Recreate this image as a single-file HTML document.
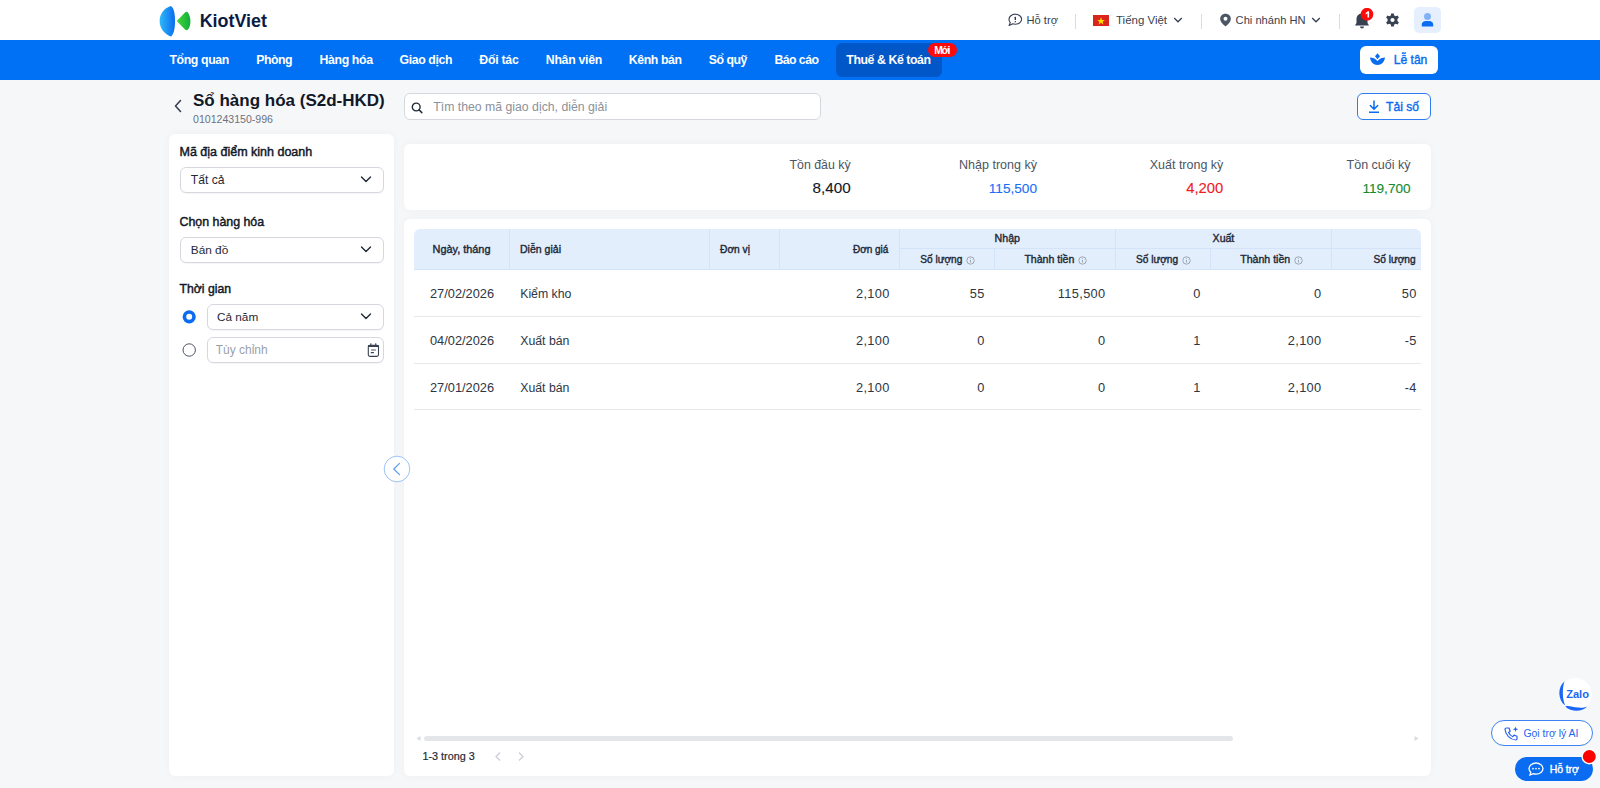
<!DOCTYPE html>
<html><head><meta charset="utf-8"><style>
html,body{margin:0;padding:0;width:1600px;height:788px;overflow:hidden;background:#f6f7f9;font-family:"Liberation Sans",sans-serif}
.bm{display:inline-block;width:0;height:0}
.t{position:absolute;line-height:1;white-space:nowrap;font-family:"Liberation Sans",sans-serif}
</style></head><body>
<div style="position:absolute;left:0;top:0;width:1600px;height:40px;background:#fff"></div>
<svg style="position:absolute;left:155px;top:2px" width="40" height="38" viewBox="0 0 40 38"><defs><linearGradient id="lb" x1="0" x2="1" y1="0" y2="0"><stop offset="0" stop-color="#2fb8f8"/><stop offset="1" stop-color="#0a6cf0"/></linearGradient>
<linearGradient id="lg" x1="0" x2="1"><stop offset="0" stop-color="#46d63a"/><stop offset="1" stop-color="#10ad3c"/></linearGradient></defs>
<path d="M16,4 C19,6 20,12 20,19 C20,26 19,32 16,34.5 C9,32 4.6,26 4.6,19 C4.6,12 9,6 16,4 Z" fill="url(#lb)"/>
<path d="M21.7,19 L30,10.5 C31,9.6 32,9.6 33,10.6 C35,14 35.4,17 35.4,19 C35.4,22 35,25 33,27.6 C32,28.6 31,28.6 30,27.6 Z" fill="url(#lg)"/></svg>
<div class="t" style="left:199.70px;top:13.01px;font-size:17.90px;font-weight:700;color:#0b1b44;">KiotViet<span class="bm" id="t1"></span></div>
<svg style="position:absolute;left:1008px;top:13px" width="15" height="14" viewBox="0 0 15 14"><path d="M7.3,1.2 C10.9,1.2 13.6,3.5 13.6,6.2 C13.6,8.9 10.9,11.2 7.3,11.2 C6.4,11.2 5.6,11.1 4.8,10.8 L1.1,12.5 L2.3,9.6 C1.4,8.7 1,7.5 1,6.2 C1,3.5 3.7,1.2 7.3,1.2 Z" fill="none" stroke="#374151" stroke-width="1.15" stroke-linejoin="round"/><rect x="6.65" y="3.8" width="1.3" height="3.3" rx="0.4" fill="#1f2937"/><rect x="6.65" y="8" width="1.3" height="1.3" rx="0.4" fill="#1f2937"/></svg>
<div class="t" style="left:1026.50px;top:15.01px;font-size:11.16px;font-weight:400;color:#374151;">Hỗ trợ<span class="bm" id="t2"></span></div>
<div style="position:absolute;left:1075px;top:14px;width:1px;height:15px;background:#d9dde3"></div>
<div style="position:absolute;left:1093px;top:15px;width:16px;height:11px;background:#da251d"></div>
<svg style="position:absolute;left:1093px;top:15px" width="16" height="11" viewBox="0 0 16 11"><polygon points="8,2.2 9,5 11.9,5 9.6,6.7 10.4,9.4 8,7.8 5.6,9.4 6.4,6.7 4.1,5 7,5" fill="#ffde00"/></svg>
<div class="t" style="left:1116.00px;top:15.00px;font-size:11.47px;font-weight:400;color:#374151;">Tiếng Việt<span class="bm" id="t3"></span></div>
<svg style="position:absolute;left:1173px;top:16px" width="10" height="8" viewBox="0 0 10 8"><path d="M1.2,2 L5,5.8 L8.8,2" fill="none" stroke="#374151" stroke-width="1.3"/></svg>
<div style="position:absolute;left:1201px;top:14px;width:1px;height:15px;background:#d9dde3"></div>
<svg style="position:absolute;left:1219px;top:13px" width="13" height="14" viewBox="0 0 13 14"><path d="M6.5,0.8 C9.6,0.8 11.8,3 11.8,6 C11.8,9 8.5,12 6.5,13.4 C4.5,12 1.2,9 1.2,6 C1.2,3 3.4,0.8 6.5,0.8 Z" fill="#4b5563"/><circle cx="6.5" cy="5.8" r="2" fill="#fff"/></svg>
<div class="t" style="left:1235.60px;top:15.01px;font-size:11.14px;font-weight:400;color:#374151;">Chi nhánh HN<span class="bm" id="t4"></span></div>
<svg style="position:absolute;left:1311px;top:16px" width="10" height="8" viewBox="0 0 10 8"><path d="M1.2,2 L5,5.8 L8.8,2" fill="none" stroke="#374151" stroke-width="1.3"/></svg>
<div style="position:absolute;left:1339px;top:14px;width:1px;height:15px;background:#d9dde3"></div>
<svg style="position:absolute;left:1353px;top:8px" width="22" height="22" viewBox="0 0 22 22"><path d="M9,5.5 C12.5,5.5 14.5,8 14.5,11.5 L14.5,15 L16,17.5 L2,17.5 L3.5,15 L3.5,11.5 C3.5,8 5.5,5.5 9,5.5 Z" fill="#374151"/><path d="M7,18.5 L11,18.5 C11,19.8 10,20.5 9,20.5 C8,20.5 7,19.8 7,18.5 Z" fill="#374151"/><circle cx="14" cy="6.2" r="6.3" fill="#ff0a0a"/><path d="M12.7,4.9 L14.8,3.2 L16.1,3.2 L16.1,9.5 L14.5,9.5 L14.5,5.3 L12.7,6.4 Z" fill="#fff"/></svg>
<svg style="position:absolute;left:1385px;top:13px" width="15" height="14" viewBox="0 0 15 14"><g transform="translate(7.5,7)"><path d="M-1.3,-6.5 L1.3,-6.5 L1.7,-4.6 L3.2,-3.8 L5,-4.6 L6.4,-2.4 L4.9,-1.1 L4.9,1.1 L6.4,2.4 L5,4.6 L3.2,3.8 L1.7,4.6 L1.3,6.5 L-1.3,6.5 L-1.7,4.6 L-3.2,3.8 L-5,4.6 L-6.4,2.4 L-4.9,1.1 L-4.9,-1.1 L-6.4,-2.4 L-5,-4.6 L-3.2,-3.8 L-1.7,-4.6 Z" fill="#374151"/><circle r="2.1" fill="#fff"/></g></svg>
<div style="position:absolute;left:1414px;top:7px;width:27px;height:26px;background:#e5effd;border-radius:5px"></div>
<svg style="position:absolute;left:1414px;top:7px" width="27" height="26" viewBox="0 0 27 26"><circle cx="13.5" cy="9.6" r="3.5" fill="#7fb2f8"/><path d="M7.8,19.5 L7.8,17.6 C7.8,15.4 9.6,14.1 11.8,14.1 L15.2,14.1 C17.4,14.1 19.2,15.4 19.2,17.6 L19.2,19.5 Z" fill="#0a6cf0"/></svg>
<div style="position:absolute;left:0;top:40px;width:1600px;height:40px;background:#0070f4"></div>
<div style="position:absolute;left:836px;top:43.3px;width:105.5px;height:33.3px;background:#0157c8;border-radius:6px"></div>
<div class="t" style="left:169.50px;top:54.01px;font-size:12.30px;font-weight:700;color:#fff;letter-spacing:-0.387px;">Tổng quan<span class="bm" id="t5"></span></div>
<div class="t" style="left:256.25px;top:54.01px;font-size:12.30px;font-weight:700;color:#fff;letter-spacing:-0.501px;">Phòng<span class="bm" id="t6"></span></div>
<div class="t" style="left:319.50px;top:54.01px;font-size:12.30px;font-weight:700;color:#fff;letter-spacing:-0.361px;">Hàng hóa<span class="bm" id="t7"></span></div>
<div class="t" style="left:399.50px;top:54.01px;font-size:12.30px;font-weight:700;color:#fff;letter-spacing:-0.380px;">Giao dịch<span class="bm" id="t8"></span></div>
<div class="t" style="left:479.25px;top:54.01px;font-size:12.30px;font-weight:700;color:#fff;letter-spacing:-0.251px;">Đối tác<span class="bm" id="t9"></span></div>
<div class="t" style="left:545.80px;top:54.01px;font-size:12.30px;font-weight:700;color:#fff;letter-spacing:-0.297px;">Nhân viên<span class="bm" id="t10"></span></div>
<div class="t" style="left:628.70px;top:54.01px;font-size:12.30px;font-weight:700;color:#fff;letter-spacing:-0.390px;">Kênh bán<span class="bm" id="t11"></span></div>
<div class="t" style="left:708.80px;top:54.01px;font-size:12.30px;font-weight:700;color:#fff;letter-spacing:-0.500px;">Sổ quỹ<span class="bm" id="t12"></span></div>
<div class="t" style="left:774.40px;top:54.01px;font-size:12.30px;font-weight:700;color:#fff;letter-spacing:-0.541px;">Báo cáo<span class="bm" id="t13"></span></div>
<div class="t" style="left:846.30px;top:54.01px;font-size:12.30px;font-weight:700;color:#fff;letter-spacing:-0.423px;">Thuế &amp; Kế toán<span class="bm" id="t14"></span></div>
<div style="position:absolute;left:928.3px;top:43.2px;width:28.5px;height:14.3px;background:#ff0a0a;border-radius:7.2px"></div>
<div class="t" style="left:934.20px;top:46.01px;font-size:10.40px;font-weight:700;color:#fff;letter-spacing:-1.373px;">Mới<span class="bm" id="t15"></span></div>
<div style="position:absolute;left:1360px;top:46px;width:78px;height:28px;background:#fff;border-radius:6px"></div>
<svg style="position:absolute;left:1369px;top:52px" width="17" height="14" viewBox="0 0 17 14"><path d="M8.5,1.2 L11,4.2 L8.5,7.2 L6,4.2 Z" fill="#0a6cf0"/><path d="M1,5.5 C3.5,5.5 6.5,6.5 8.5,9 C10.5,6.5 13.5,5.5 16,5.5 C15.5,10 12.5,13 8.5,13 C4.5,13 1.5,10 1,5.5 Z" fill="#0a6cf0"/></svg>
<div class="t" style="left:1393.70px;top:54.01px;font-size:12.12px;font-weight:400;color:#0a6cf0;-webkit-text-stroke:0.4px #0a6cf0;">Lễ tân<span class="bm" id="t16"></span></div>
<div style="position:absolute;left:0;top:80px;width:1600px;height:708px;background:#f6f7f9"></div>
<svg style="position:absolute;left:172px;top:98px" width="12" height="16" viewBox="0 0 12 16"><path d="M8.5,2.5 L3.5,8 L8.5,13.5" fill="none" stroke="#374151" stroke-width="1.6" stroke-linecap="round" stroke-linejoin="round"/></svg>
<div class="t" style="left:193.00px;top:92.01px;font-size:17.00px;font-weight:700;color:#111827;">Sổ hàng hóa (S2d-HKD)<span class="bm" id="t17"></span></div>
<div class="t" style="left:193.00px;top:114.00px;font-size:10.58px;font-weight:400;color:#6b7280;">0101243150-996<span class="bm" id="t18"></span></div>
<div style="position:absolute;left:404px;top:93px;width:415px;height:25px;background:#fff;border:1px solid #d5d9df;border-radius:6px"></div>
<svg style="position:absolute;left:410px;top:101px" width="14" height="13" viewBox="0 0 14 13"><circle cx="6.2" cy="6" r="3.9" fill="none" stroke="#1f2937" stroke-width="1.4"/><path d="M9,8.8 L11.8,11.6" stroke="#1f2937" stroke-width="1.5" stroke-linecap="round"/></svg>
<div class="t" style="left:433.25px;top:101.00px;font-size:12.28px;font-weight:400;color:#8b919b;">Tìm theo mã giao dịch, diễn giải<span class="bm" id="t19"></span></div>
<div style="position:absolute;left:1357px;top:93px;width:72px;height:25px;background:#fff;border:1px solid #2f7df5;border-radius:6px"></div>
<svg style="position:absolute;left:1367px;top:100px" width="14" height="14" viewBox="0 0 14 14"><path d="M7,1 L7,9 M3.3,5.5 L7,9.2 L10.7,5.5" fill="none" stroke="#0a6cf0" stroke-width="1.5" stroke-linecap="round" stroke-linejoin="round"/><rect x="2" y="11.5" width="10" height="1.5" fill="#0a6cf0"/></svg>
<div class="t" style="left:1386.00px;top:101.00px;font-size:12.12px;font-weight:400;color:#0a6cf0;-webkit-text-stroke:0.4px #0a6cf0;">Tải số<span class="bm" id="t20"></span></div>
<div style="position:absolute;left:169px;top:133.5px;width:225px;height:642.5px;background:#fff;border-radius:6px;box-shadow:0 0 10px rgba(0,0,0,0.035)"></div>
<div class="t" style="left:179.50px;top:146.00px;font-size:12.50px;font-weight:400;color:#111827;-webkit-text-stroke:0.45px #111827;">Mã địa điểm kinh doanh<span class="bm" id="t21"></span></div>
<div style="position:absolute;left:180px;top:167px;width:202px;height:24px;background:#fff;border:1px solid #d5d9df;border-radius:6px;box-shadow:0 1px 1px rgba(0,0,0,0.04)"></div>
<svg style="position:absolute;left:360px;top:175px" width="12" height="9" viewBox="0 0 12 9"><path d="M1.5,2 L6,6.5 L10.5,2" fill="none" stroke="#1f2937" stroke-width="1.4" stroke-linecap="round" stroke-linejoin="round"/></svg>
<div class="t" style="left:190.75px;top:174.00px;font-size:12.15px;font-weight:400;color:#1f2937;">Tất cả<span class="bm" id="t22"></span></div>
<div class="t" style="left:179.50px;top:216.00px;font-size:12.39px;font-weight:400;color:#111827;-webkit-text-stroke:0.45px #111827;">Chọn hàng hóa<span class="bm" id="t23"></span></div>
<div style="position:absolute;left:180px;top:237px;width:202px;height:24px;background:#fff;border:1px solid #d5d9df;border-radius:6px;box-shadow:0 1px 1px rgba(0,0,0,0.04)"></div>
<svg style="position:absolute;left:360px;top:245px" width="12" height="9" viewBox="0 0 12 9"><path d="M1.5,2 L6,6.5 L10.5,2" fill="none" stroke="#1f2937" stroke-width="1.4" stroke-linecap="round" stroke-linejoin="round"/></svg>
<div class="t" style="left:190.75px;top:245.00px;font-size:11.83px;font-weight:400;color:#1f2937;">Bán đồ<span class="bm" id="t24"></span></div>
<div class="t" style="left:179.50px;top:283.00px;font-size:12.22px;font-weight:400;color:#111827;-webkit-text-stroke:0.45px #111827;">Thời gian<span class="bm" id="t25"></span></div>
<div style="position:absolute;left:206.5px;top:303.75px;width:175.5px;height:24px;background:#fff;border:1px solid #d5d9df;border-radius:6px;box-shadow:0 1px 1px rgba(0,0,0,0.04)"></div>
<svg style="position:absolute;left:360px;top:311.75px" width="12" height="9" viewBox="0 0 12 9"><path d="M1.5,2 L6,6.5 L10.5,2" fill="none" stroke="#1f2937" stroke-width="1.4" stroke-linecap="round" stroke-linejoin="round"/></svg>
<div class="t" style="left:217.00px;top:311.00px;font-size:11.78px;font-weight:400;color:#1f2937;">Cả năm<span class="bm" id="t26"></span></div>
<div style="position:absolute;left:206.5px;top:337px;width:175.5px;height:24px;background:#fff;border:1px solid #d5d9df;border-radius:6px;box-shadow:0 1px 1px rgba(0,0,0,0.04)"></div>
<div class="t" style="left:215.80px;top:345.01px;font-size:11.97px;font-weight:400;color:#9aa1ab;">Tùy chỉnh<span class="bm" id="t27"></span></div>
<svg style="position:absolute;left:366px;top:343px" width="14" height="15" viewBox="0 0 14 15"><rect x="2.3" y="2.4" width="10.2" height="11" rx="1.6" fill="none" stroke="#374151" stroke-width="1.1"/><rect x="1.8" y="1.9" width="11.2" height="2.2" rx="1" fill="#374151"/><rect x="4.3" y="0.3" width="1.1" height="2.4" fill="#374151"/><rect x="9.2" y="0.3" width="1.1" height="2.4" fill="#374151"/><rect x="5" y="6.5" width="5" height="1.1" rx="0.5" fill="#4b5563"/><rect x="4.7" y="9.1" width="3.3" height="1.1" rx="0.5" fill="#374151"/></svg>
<svg style="position:absolute;left:182px;top:310px" width="15" height="15" viewBox="0 0 15 15"><circle cx="7.2" cy="6.8" r="4.8" fill="#fff" stroke="#0a6cf0" stroke-width="3.6"/></svg>
<svg style="position:absolute;left:182px;top:343px" width="15" height="15" viewBox="0 0 15 15"><circle cx="7.2" cy="7" r="6.2" fill="#fff" stroke="#4b5563" stroke-width="1"/></svg>
<div style="position:absolute;left:404px;top:143.5px;width:1027px;height:66.5px;background:#fff;border-radius:6px;box-shadow:0 0 10px rgba(0,0,0,0.035)"></div>
<div class="t" style="right:749.40px;top:159.01px;font-size:12.37px;font-weight:400;color:#4b5563;">Tồn đầu kỳ<span class="bm" id="t28"></span></div>
<div class="t" style="right:749.40px;top:180.00px;font-size:15.23px;font-weight:400;color:#111827;-webkit-text-stroke:0.12px #111827">8,400<span class="bm" id="t29"></span></div>
<div class="t" style="right:563.00px;top:159.00px;font-size:12.53px;font-weight:400;color:#4b5563;">Nhập trong kỳ<span class="bm" id="t30"></span></div>
<div class="t" style="right:563.00px;top:182.00px;font-size:13.63px;font-weight:400;color:#1a6ef5;-webkit-text-stroke:0.12px #1a6ef5">115,500<span class="bm" id="t31"></span></div>
<div class="t" style="right:376.70px;top:159.00px;font-size:12.49px;font-weight:400;color:#4b5563;">Xuất trong kỳ<span class="bm" id="t32"></span></div>
<div class="t" style="right:376.70px;top:181.00px;font-size:14.83px;font-weight:400;color:#ee1c24;-webkit-text-stroke:0.12px #ee1c24">4,200<span class="bm" id="t33"></span></div>
<div class="t" style="right:189.40px;top:159.01px;font-size:12.54px;font-weight:400;color:#4b5563;">Tồn cuối kỳ<span class="bm" id="t34"></span></div>
<div class="t" style="right:189.40px;top:182.00px;font-size:13.62px;font-weight:400;color:#178a2e;-webkit-text-stroke:0.12px #178a2e">119,700<span class="bm" id="t35"></span></div>
<div style="position:absolute;left:404px;top:218.5px;width:1027px;height:557.5px;background:#fff;border-radius:6px;box-shadow:0 0 10px rgba(0,0,0,0.035)"></div>
<div style="position:absolute;left:414.25px;top:228.5px;width:1006.75px;height:41px;background:#e3eefd;border-radius:6px 6px 0 0;border-bottom:1px solid #d3e3fa;box-sizing:border-box"></div>
<div style="position:absolute;left:508.75px;top:228.5px;width:1px;height:41px;background:#d3e3fa"></div>
<div style="position:absolute;left:709.0px;top:228.5px;width:1px;height:41px;background:#d3e3fa"></div>
<div style="position:absolute;left:779.0px;top:228.5px;width:1px;height:41px;background:#d3e3fa"></div>
<div style="position:absolute;left:898.9px;top:228.5px;width:1px;height:41px;background:#d3e3fa"></div>
<div style="position:absolute;left:1114.9px;top:228.5px;width:1px;height:41px;background:#d3e3fa"></div>
<div style="position:absolute;left:1331.1px;top:228.5px;width:1px;height:41px;background:#d3e3fa"></div>
<div style="position:absolute;left:993.7px;top:248.3px;width:1px;height:21px;background:#d3e3fa"></div>
<div style="position:absolute;left:1209.8px;top:248.3px;width:1px;height:21px;background:#d3e3fa"></div>
<div style="position:absolute;left:899.4px;top:248px;width:521.6px;height:1px;background:#d3e3fa"></div>
<div class="t" style="left:432.50px;top:244.01px;font-size:10.91px;font-weight:400;color:#1f2937;-webkit-text-stroke:0.4px #1f2937">Ngày, tháng<span class="bm" id="t36"></span></div>
<div class="t" style="left:520.00px;top:244.01px;font-size:10.54px;font-weight:400;color:#1f2937;-webkit-text-stroke:0.4px #1f2937">Diễn giải<span class="bm" id="t37"></span></div>
<div class="t" style="left:720.00px;top:245.01px;font-size:10.22px;font-weight:400;color:#1f2937;-webkit-text-stroke:0.4px #1f2937">Đơn vị<span class="bm" id="t38"></span></div>
<div class="t" style="right:711.60px;top:245.01px;font-size:10.01px;font-weight:400;color:#1f2937;-webkit-text-stroke:0.4px #1f2937">Đơn giá<span class="bm" id="t39"></span></div>
<div class="t" style="left:994.60px;top:233.01px;font-size:10.63px;font-weight:400;color:#1f2937;-webkit-text-stroke:0.4px #1f2937">Nhập<span class="bm" id="t40"></span></div>
<div class="t" style="left:1212.60px;top:233.01px;font-size:10.55px;font-weight:400;color:#1f2937;-webkit-text-stroke:0.4px #1f2937">Xuất<span class="bm" id="t41"></span></div>
<div class="t" style="left:920.25px;top:255.01px;font-size:10.10px;font-weight:400;color:#1f2937;-webkit-text-stroke:0.4px #1f2937">Số lượng<span class="bm" id="t42"></span></div>
<svg style="position:absolute;left:966px;top:256px" width="9" height="9" viewBox="0 0 9 9"><circle cx="4.5" cy="4.5" r="3.7" fill="none" stroke="#8f96a0" stroke-width="0.8"/><rect x="4.1" y="3.9" width="0.8" height="2.6" fill="#8f96a0"/><rect x="4.1" y="2.4" width="0.8" height="0.8" fill="#8f96a0"/></svg>
<div class="t" style="left:1024.40px;top:254.01px;font-size:10.58px;font-weight:400;color:#1f2937;-webkit-text-stroke:0.4px #1f2937">Thành tiền<span class="bm" id="t43"></span></div>
<svg style="position:absolute;left:1078px;top:256px" width="9" height="9" viewBox="0 0 9 9"><circle cx="4.5" cy="4.5" r="3.7" fill="none" stroke="#8f96a0" stroke-width="0.8"/><rect x="4.1" y="3.9" width="0.8" height="2.6" fill="#8f96a0"/><rect x="4.1" y="2.4" width="0.8" height="0.8" fill="#8f96a0"/></svg>
<div class="t" style="left:1136.00px;top:255.01px;font-size:10.10px;font-weight:400;color:#1f2937;-webkit-text-stroke:0.4px #1f2937">Số lượng<span class="bm" id="t44"></span></div>
<svg style="position:absolute;left:1181.8px;top:256px" width="9" height="9" viewBox="0 0 9 9"><circle cx="4.5" cy="4.5" r="3.7" fill="none" stroke="#8f96a0" stroke-width="0.8"/><rect x="4.1" y="3.9" width="0.8" height="2.6" fill="#8f96a0"/><rect x="4.1" y="2.4" width="0.8" height="0.8" fill="#8f96a0"/></svg>
<div class="t" style="left:1240.25px;top:254.01px;font-size:10.58px;font-weight:400;color:#1f2937;-webkit-text-stroke:0.4px #1f2937">Thành tiền<span class="bm" id="t45"></span></div>
<svg style="position:absolute;left:1293.6px;top:256px" width="9" height="9" viewBox="0 0 9 9"><circle cx="4.5" cy="4.5" r="3.7" fill="none" stroke="#8f96a0" stroke-width="0.8"/><rect x="4.1" y="3.9" width="0.8" height="2.6" fill="#8f96a0"/><rect x="4.1" y="2.4" width="0.8" height="0.8" fill="#8f96a0"/></svg>
<div class="t" style="right:184.40px;top:255.01px;font-size:10.12px;font-weight:400;color:#1f2937;-webkit-text-stroke:0.4px #1f2937">Số lượng<span class="bm" id="t46"></span></div>
<div style="position:absolute;left:414.25px;top:316px;width:1006.75px;height:1px;background:#e6e8ec"></div>
<div class="t" style="left:429.97px;top:288.00px;font-size:12.80px;font-weight:400;color:#2d3644;">27/02/2026<span class="bm" id="t47"></span></div>
<div class="t" style="left:520.20px;top:288.01px;font-size:12.30px;font-weight:400;color:#2d3644;">Kiểm kho<span class="bm" id="t48"></span></div>
<div class="t" style="right:710.25px;top:288.00px;font-size:12.80px;font-weight:400;color:#2d3644;letter-spacing:0.350px;">2,100<span class="bm" id="t49"></span></div>
<div class="t" style="right:615.25px;top:288.00px;font-size:12.80px;font-weight:400;color:#2d3644;letter-spacing:0.350px;">55<span class="bm" id="t50"></span></div>
<div class="t" style="right:494.45px;top:288.00px;font-size:12.80px;font-weight:400;color:#2d3644;letter-spacing:0.350px;">115,500<span class="bm" id="t51"></span></div>
<div class="t" style="right:399.25px;top:288.00px;font-size:12.80px;font-weight:400;color:#2d3644;letter-spacing:0.350px;">0<span class="bm" id="t52"></span></div>
<div class="t" style="right:278.45px;top:288.00px;font-size:12.80px;font-weight:400;color:#2d3644;letter-spacing:0.350px;">0<span class="bm" id="t53"></span></div>
<div class="t" style="right:183.25px;top:288.00px;font-size:12.80px;font-weight:400;color:#2d3644;letter-spacing:0.350px;">50<span class="bm" id="t54"></span></div>
<div style="position:absolute;left:414.25px;top:363px;width:1006.75px;height:1px;background:#e6e8ec"></div>
<div class="t" style="left:429.97px;top:335.01px;font-size:12.80px;font-weight:400;color:#2d3644;">04/02/2026<span class="bm" id="t55"></span></div>
<div class="t" style="left:520.20px;top:335.00px;font-size:12.30px;font-weight:400;color:#2d3644;">Xuất bán<span class="bm" id="t56"></span></div>
<div class="t" style="right:710.25px;top:335.01px;font-size:12.80px;font-weight:400;color:#2d3644;letter-spacing:0.350px;">2,100<span class="bm" id="t57"></span></div>
<div class="t" style="right:615.25px;top:335.01px;font-size:12.80px;font-weight:400;color:#2d3644;letter-spacing:0.350px;">0<span class="bm" id="t58"></span></div>
<div class="t" style="right:494.45px;top:335.01px;font-size:12.80px;font-weight:400;color:#2d3644;letter-spacing:0.350px;">0<span class="bm" id="t59"></span></div>
<div class="t" style="right:399.25px;top:335.01px;font-size:12.80px;font-weight:400;color:#2d3644;letter-spacing:0.350px;">1<span class="bm" id="t60"></span></div>
<div class="t" style="right:278.45px;top:335.01px;font-size:12.80px;font-weight:400;color:#2d3644;letter-spacing:0.350px;">2,100<span class="bm" id="t61"></span></div>
<div class="t" style="right:183.25px;top:335.01px;font-size:12.80px;font-weight:400;color:#2d3644;letter-spacing:0.350px;">-5<span class="bm" id="t62"></span></div>
<div style="position:absolute;left:414.25px;top:409px;width:1006.75px;height:1px;background:#e6e8ec"></div>
<div class="t" style="left:429.97px;top:382.01px;font-size:12.80px;font-weight:400;color:#2d3644;">27/01/2026<span class="bm" id="t63"></span></div>
<div class="t" style="left:520.20px;top:382.00px;font-size:12.30px;font-weight:400;color:#2d3644;">Xuất bán<span class="bm" id="t64"></span></div>
<div class="t" style="right:710.25px;top:382.01px;font-size:12.80px;font-weight:400;color:#2d3644;letter-spacing:0.350px;">2,100<span class="bm" id="t65"></span></div>
<div class="t" style="right:615.25px;top:382.01px;font-size:12.80px;font-weight:400;color:#2d3644;letter-spacing:0.350px;">0<span class="bm" id="t66"></span></div>
<div class="t" style="right:494.45px;top:382.01px;font-size:12.80px;font-weight:400;color:#2d3644;letter-spacing:0.350px;">0<span class="bm" id="t67"></span></div>
<div class="t" style="right:399.25px;top:382.01px;font-size:12.80px;font-weight:400;color:#2d3644;letter-spacing:0.350px;">1<span class="bm" id="t68"></span></div>
<div class="t" style="right:278.45px;top:382.01px;font-size:12.80px;font-weight:400;color:#2d3644;letter-spacing:0.350px;">2,100<span class="bm" id="t69"></span></div>
<div class="t" style="right:183.25px;top:382.01px;font-size:12.80px;font-weight:400;color:#2d3644;letter-spacing:0.350px;">-4<span class="bm" id="t70"></span></div>
<svg style="position:absolute;left:415px;top:735px" width="7" height="7" viewBox="0 0 7 7"><path d="M5.5,1 L1.5,3.5 L5.5,6 Z" fill="#d8dbe0"/></svg>
<div style="position:absolute;left:424px;top:736px;width:808.5px;height:5px;background:#e4e6ea;border-radius:3px"></div>
<svg style="position:absolute;left:1413px;top:735px" width="7" height="7" viewBox="0 0 7 7"><path d="M1.5,1 L5.5,3.5 L1.5,6 Z" fill="#d8dbe0"/></svg>
<div class="t" style="left:422.50px;top:751.00px;font-size:10.81px;font-weight:400;color:#1f2937;-webkit-text-stroke:0.2px #1f2937">1-3 trong 3<span class="bm" id="t71"></span></div>
<svg style="position:absolute;left:494px;top:751px" width="8" height="10" viewBox="0 0 8 10"><path d="M6,1.5 L2,5.5 L6,9.5" fill="none" stroke="#c9cdd3" stroke-width="1.2"/></svg>
<svg style="position:absolute;left:517px;top:751px" width="8" height="10" viewBox="0 0 8 10"><path d="M2,1.5 L6,5.5 L2,9.5" fill="none" stroke="#c9cdd3" stroke-width="1.2"/></svg>
<svg style="position:absolute;left:383px;top:455px" width="28" height="28" viewBox="0 0 28 28"><circle cx="14" cy="14" r="12.8" fill="#fff" stroke="#9cc4f7" stroke-width="1"/><path d="M16.5,8.3 L10.8,14 L16.5,19.7" fill="none" stroke="#5c9bf3" stroke-width="1.15" stroke-linecap="round" stroke-linejoin="round"/></svg>
<svg style="position:absolute;left:1550px;top:670px" width="50" height="50" viewBox="0 0 50 50"><circle cx="25.4" cy="24.4" r="16.4" fill="#fff"/><path d="M14.5,11.5 C7.6,16.5 7.4,30 15.3,35.6 C12.4,29.5 12,18.5 14.5,11.5 Z" fill="#1a66f5"/><path d="M15.2,36.4 C19,35.4 23,37.2 28,37.6 C32,37.9 35,37.4 37,36.4 C32,42 21.5,42.4 15.2,36.4 Z" fill="#1a66f5"/></svg>
<div class="t" style="left:1566.20px;top:689.00px;font-size:11.09px;font-weight:700;color:#1a66f5;">Zalo<span class="bm" id="t72"></span></div>
<div style="position:absolute;left:1491px;top:719.5px;width:99.5px;height:24.5px;background:#fff;border:1px solid #3b82f6;border-radius:13px"></div>
<svg style="position:absolute;left:1503px;top:726px" width="16" height="15" viewBox="0 0 16 15"><path d="M3.5,2 L6,2 L7.2,5.2 L5.6,6.5 C6.5,8.5 7.8,9.8 9.8,10.7 L11.1,9.1 L14,10.3 L14,12.8 C14,13.5 13.4,14 12.8,14 C7,13.5 2.5,9 2,3.2 C2,2.6 2.6,2 3.3,2 Z" fill="none" stroke="#2563eb" stroke-width="1.2" stroke-linejoin="round"/><path d="M12.5,0.5 L13.2,2.6 L15.3,3.3 L13.2,4 L12.5,6.1 L11.8,4 L9.7,3.3 L11.8,2.6 Z" fill="#2563eb"/></svg>
<div class="t" style="left:1523.40px;top:729.00px;font-size:10.44px;font-weight:400;color:#2563eb;">Gọi trợ lý AI<span class="bm" id="t73"></span></div>
<div style="position:absolute;left:1515px;top:756.5px;width:77.5px;height:24.5px;background:#0a6cf0;border-radius:13px"></div>
<svg style="position:absolute;left:1528px;top:762px" width="16" height="14" viewBox="0 0 16 14"><path d="M8,1 C11.9,1 15,3.6 15,6.6 C15,9.6 11.9,12.2 8,12.2 C7,12.2 6,12 5.2,11.7 L2,13 L2.8,10.3 C1.7,9.3 1,8 1,6.6 C1,3.6 4.1,1 8,1 Z" fill="none" stroke="#fff" stroke-width="1.3"/><circle cx="5" cy="6.6" r="0.9" fill="#fff"/><circle cx="8" cy="6.6" r="0.9" fill="#fff"/><circle cx="11" cy="6.6" r="0.9" fill="#fff"/></svg>
<div class="t" style="left:1549.70px;top:764.01px;font-size:10.50px;font-weight:400;color:#fff;-webkit-text-stroke:0.35px #fff;letter-spacing:-0.088px;">Hỗ trợ<span class="bm" id="t74"></span></div>
<svg style="position:absolute;left:1581px;top:748px" width="17" height="17" viewBox="0 0 17 17"><circle cx="8.3" cy="8.5" r="7.2" fill="#ff0000" stroke="#fff" stroke-width="1.4"/></svg>
</body></html>
